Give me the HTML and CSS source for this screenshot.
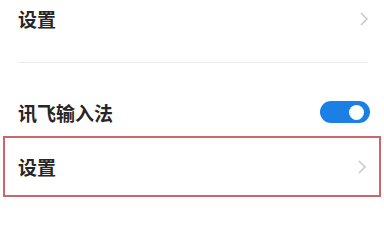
FILE: index.html
```html
<!DOCTYPE html>
<html lang="zh-CN">
<head>
<meta charset="utf-8">
<link rel="stylesheet" href="styles.css">
</head>
<body>
<div class="page">
  <div class="row row-top">
    <span class="label">设置</span>
    <svg class="chev" viewBox="0 0 8 14" width="8" height="14"><polyline points="1,1 7,7 1,13" fill="none" stroke="#c4c4c4" stroke-width="1.4"/></svg>
  </div>
  <div class="divider"></div>
  <div class="row row-toggle">
    <span class="label">讯飞输入法</span>
    <div class="toggle"><div class="knob"></div></div>
  </div>
  <div class="highlight">
    <div class="row row-inner">
      <span class="label">设置</span>
      <svg class="chev" viewBox="0 0 8 14" width="8" height="14"><polyline points="1,1 7,7 1,13" fill="none" stroke="#c4c4c4" stroke-width="1.4"/></svg>
    </div>
  </div>
</div>
</body>
</html>
```
FILE: styles.css
```css
html, body {
  margin: 0;
  padding: 0;
  background: #ffffff;
}
.page {
  width: 384px;
  height: 215px;
  overflow: hidden;
  font-family: "Noto Sans CJK SC", "Noto Sans", sans-serif;
  color: #262626;
}
.row {
  display: flex;
  align-items: center;
  justify-content: space-between;
}
.label {
  font-size: 19px;
  font-weight: 600;
  line-height: 1;
}
.row-top {
  height: 37px;
  padding: 0 16px 0 18px;
}
.divider {
  height: 1px;
  background: #ececec;
  margin: 25px 16px 0 18px;
}
.row-toggle {
  margin-top: 30px;
  height: 38px;
  padding: 0 14px 0 18px;
}
.toggle {
  width: 50px;
  height: 22px;
  border-radius: 11px;
  background: #1b7fe6;
  display: flex;
  align-items: center;
  justify-content: flex-end;
  padding-right: 6px;
  box-sizing: border-box;
}
.knob {
  width: 15px;
  height: 15px;
  border-radius: 50%;
  background: #ffffff;
}
.highlight {
  margin: 5px 3px 0 3px;
  height: 61px;
  box-sizing: border-box;
  border: 2px solid #c8676c;
  display: flex;
  flex-direction: column;
  justify-content: center;
}
.row-inner {
  padding: 0 13px 0 13px;
}
```
